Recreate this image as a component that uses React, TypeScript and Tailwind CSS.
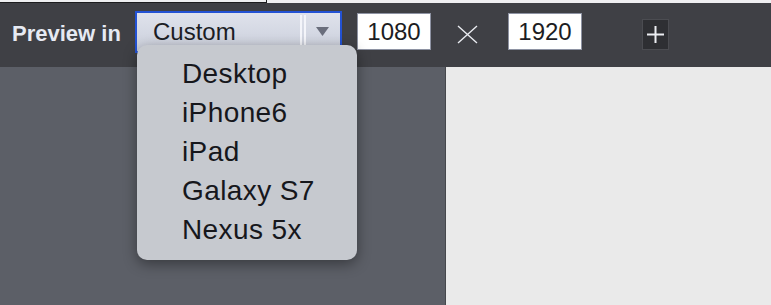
const devices = ["Desktop", "iPhone6", "iPad", "Galaxy S7", "Nexus 5x"];

function SizeBox({ value }: { value: string }) {
  return (
    <div className="mt-[10px] flex h-[37px] w-[74px] items-center justify-center border border-[#8e93a3] bg-white text-[24px] leading-[24px] text-[#1c1c22]">
      {value}
    </div>
  );
}

function App() {
  return (
    <div
      className="flex h-[305px] w-[771px] flex-col overflow-hidden bg-[#404146]"
      style={{ fontFamily: '"Liberation Sans", Arial, sans-serif' }}
    >
      {/* strip left over from the window above */}
      <div className="flex h-[3px] bg-[#efeff1]">
        <div className="h-[3px] w-[267px] border-b border-r border-[#1d1d1f]" />
      </div>

      {/* toolbar */}
      <div className="relative z-10 flex h-[64px] items-start bg-[#3f4045]">
        <div className="mt-[18px] w-[135px] pl-[12px] text-[22px] font-bold leading-[26px] text-[#e6eaf3]">
          Preview in
        </div>

        <div className="relative mt-[8px] h-[42px] w-[207px] border-2 border-[#2352d4] bg-gradient-to-b from-[#dfe2ec] to-[#cbcfdb]">
          <div className="pl-[16px] pt-[7px] text-[24px] leading-[24px] text-[#1c1d25]">Custom</div>
          <div className="absolute left-[163px] top-[2px] flex h-[32px] gap-[2px]">
            <div className="w-[2px] bg-[#f4f5fa]" />
            <div className="w-[2px] bg-[#f4f5fa]" />
          </div>
          <svg className="absolute left-[179px] top-[14px]" width="13" height="9" viewBox="0 0 13 9">
            <path d="M0 0 H13 L6.5 9 Z" fill="#6a6e7c" />
          </svg>

          <div className="absolute left-0 top-[32px] h-[215px] w-[220px] rounded-[10px] bg-[#c6c9cf] pl-[45px] pt-[9px] shadow-[0_4px_14px_rgba(0,0,0,0.4)]">
            {devices.map((d) => (
              <div key={d} className="text-[28px] leading-[39px] tracking-[0.4px] text-[#16171c]">
                {d}
              </div>
            ))}
          </div>
        </div>

        <div className="ml-[15px]">
          <SizeBox value="1080" />
        </div>

        <svg className="ml-[26px] mt-[22px]" width="21" height="19" viewBox="0 0 21 19">
          <path d="M1 1 L20 18 M20 1 L1 18" stroke="#e9ebf0" strokeWidth="1.4" />
        </svg>

        <div className="ml-[30px]">
          <SizeBox value="1920" />
        </div>

        <div className="ml-[60px] mt-[16px] flex h-[31px] w-[27px] items-center justify-center border border-[#4b4c51] bg-[#2e2f33]">
          <svg width="17" height="17" viewBox="0 0 17 17">
            <path d="M8.5 0 V17 M0 8.5 H17" stroke="#eceef2" strokeWidth="2" />
          </svg>
        </div>
      </div>

      {/* canvas */}
      <div className="flex flex-1">
        <div className="w-[446px] border-r border-[#46484d] bg-[#5c5f67]" />
        <div className="flex-1 bg-[#eaeaea]" />
      </div>
    </div>
  );
}

export default App;
